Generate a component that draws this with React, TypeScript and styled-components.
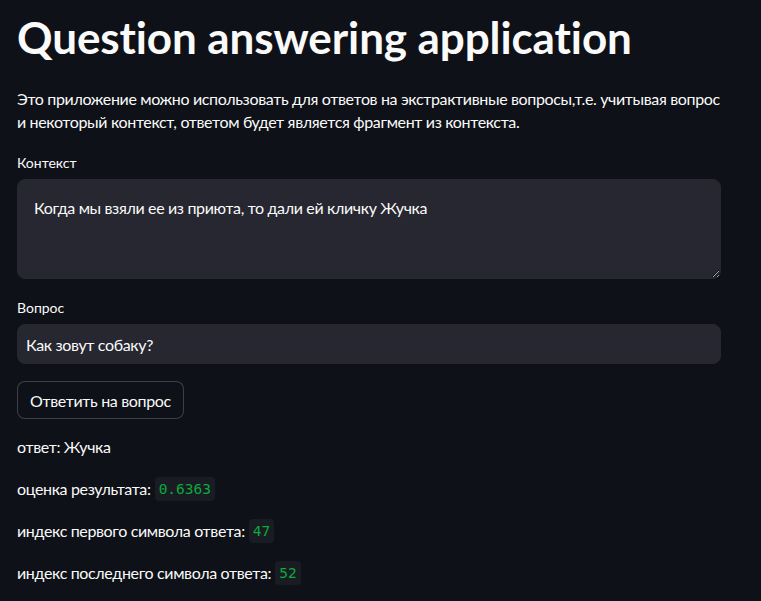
import React from "react";
import styled, { createGlobalStyle } from "styled-components";

const Global = createGlobalStyle`
  html, body { margin: 0; padding: 0; background: #0e1117; }
  body { font-family: Lato, "Noto Sans", sans-serif; color: #fafafa; }
  * { box-sizing: border-box; }
`;

const Main = styled.main`
  width: 761px;
  min-height: 601px;
  padding: 6px 40px 0 17px;
  display: flex;
  flex-direction: column;
`;

const Title = styled.h1`
  margin: 0;
  font-size: 44px;
  font-weight: 700;
  line-height: 62px;
  letter-spacing: -0.1px;
`;

const Intro = styled.p`
  margin: 19px 0 0;
  font-size: 16px;
  line-height: 23px;
  letter-spacing: -0.35px;
`;

const Label = styled.label<{ $top: number }>`
  display: block;
  margin-top: ${(p) => p.$top}px;
  font-size: 14px;
  line-height: 20px;
  height: 26px;
`;

const Area = styled.textarea`
  display: block;
  width: 100%;
  height: 100px;
  margin: 0;
  padding: 16px;
  border: 1px solid #262730;
  border-radius: 8px;
  background: #262730;
  color: #fafafa;
  font-family: inherit;
  font-size: 16px;
  line-height: 24px;
  letter-spacing: -0.35px;
  resize: vertical;
  outline: none;
`;

const Input = styled.input`
  display: block;
  width: 100%;
  height: 40px;
  margin: 0;
  padding: 0 8px;
  border: 1px solid #262730;
  border-radius: 8px;
  background: #262730;
  color: #fafafa;
  font-family: inherit;
  font-size: 16px;
  letter-spacing: -0.35px;
  outline: none;
`;

const Button = styled.button`
  align-self: flex-start;
  margin-top: 17px;
  height: 38px;
  padding: 0 12px;
  border: 1px solid rgba(250, 250, 250, 0.2);
  border-radius: 8px;
  background: #0e1117;
  color: #fafafa;
  font-family: inherit;
  font-size: 16px;
  letter-spacing: -0.35px;
`;

const Line = styled.p<{ $top: number }>`
  margin: ${(p) => p.$top}px 0 0;
  height: 26px;
  display: flex;
  align-items: center;
  gap: 4px;
  font-size: 16px;
  line-height: 26px;
  letter-spacing: -0.35px;
`;

const Code = styled.code`
  display: inline-block;
  height: 24px;
  padding: 0 4px;
  border-radius: 4px;
  background: #1a1c24;
  color: #09ab3b;
  font-family: "DejaVu Sans Mono", "Liberation Mono", monospace;
  font-size: 14.5px;
  line-height: 24px;
  letter-spacing: 0;
`;

export default function App() {
  return (
    <>
      <Global />
      <Main>
        <Title>Question answering application</Title>
        <Intro>
          Это приложение можно использовать для ответов на экстрактивные вопросы,т.е. учитывая вопрос и
          некоторый контекст, ответом будет является фрагмент из контекста.
        </Intro>
        <Label $top={20}>Контекст</Label>
        <Area readOnly defaultValue="Когда мы взяли ее из приюта, то дали ей кличку Жучка" />
        <Label $top={19}>Вопрос</Label>
        <Input readOnly defaultValue="Как зовут собаку?" />
        <Button>Ответить на вопрос</Button>
        <Line $top={15}>ответ: Жучка</Line>
        <Line $top={16}>
          оценка результата: <Code>0.6363</Code>
        </Line>
        <Line $top={16}>
          индекс первого символа ответа: <Code>47</Code>
        </Line>
        <Line $top={16}>
          индекс последнего символа ответа: <Code>52</Code>
        </Line>
      </Main>
    </>
  );
}
